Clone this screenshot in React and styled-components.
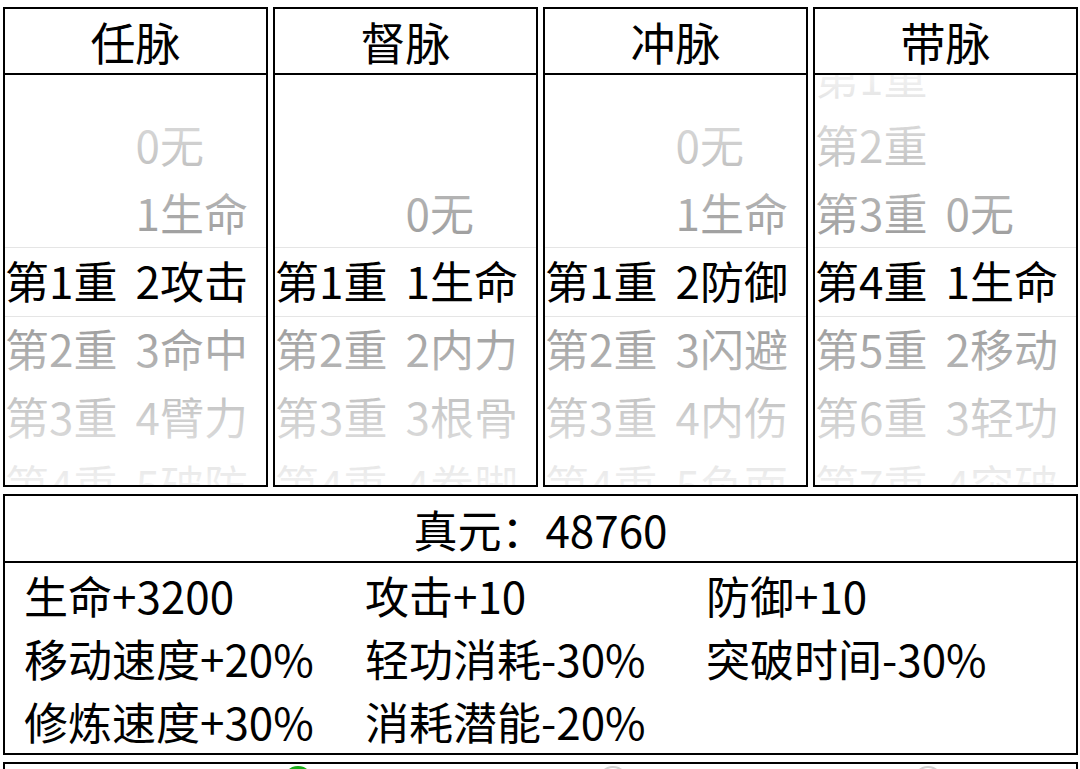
import React from "react";
import styled, { createGlobalStyle } from "styled-components";

const GlobalStyle = createGlobalStyle`
  html, body {
    margin: 0;
    padding: 0;
    background: #fff;
  }
  body {
    font-family: "Noto Sans CJK SC", "Noto Sans", sans-serif;
    color: #000;
  }
`;

const ROW = 68;
const PICKER_H = 410;
const INDICATOR_TOP = 173;
const TEXT_SIZE = 44;

const Page = styled.div`
  padding: 7px 2px 0 3px;
  display: flex;
  flex-direction: column;
  gap: 7px;
`;

const Meridians = styled.div`
  display: grid;
  grid-template-columns: repeat(4, 265px);
  gap: 5px;
`;

const Card = styled.section`
  border: 2px solid #000;
  display: flex;
  flex-direction: column;
`;

const CardTitle = styled.div`
  height: 64px;
  border-bottom: 2px solid #000;
  display: flex;
  align-items: center;
  justify-content: center;
  font-size: 45px;
  line-height: 1;
`;

const Picker = styled.div`
  position: relative;
  height: ${PICKER_H}px;
  overflow: hidden;
  display: flex;
`;

const Wheel = styled.div`
  flex: 1;
  position: relative;
  overflow: hidden;
`;

/* the selected entry lines up with the indicator band */
const WheelList = styled.ul`
  list-style: none;
  margin: 0;
  padding: 0;
  transform: translateY(${(p) => INDICATOR_TOP - 2 - p.$selected * ROW}px);
`;

const WheelItem = styled.li`
  height: ${ROW}px;
  line-height: ${ROW}px;
  font-size: ${TEXT_SIZE}px;
  white-space: nowrap;
  color: #000;
`;

const MaskTop = styled.div`
  position: absolute;
  left: 0;
  right: 0;
  top: 0;
  height: ${INDICATOR_TOP}px;
  background: linear-gradient(180deg, rgba(255, 255, 255, 0.95), rgba(255, 255, 255, 0.6));
  pointer-events: none;
`;

const MaskBottom = styled.div`
  position: absolute;
  left: 0;
  right: 0;
  bottom: 0;
  top: ${INDICATOR_TOP + ROW}px;
  background: linear-gradient(0deg, rgba(255, 255, 255, 0.95), rgba(255, 255, 255, 0.6));
  pointer-events: none;
`;

const Indicator = styled.div`
  position: absolute;
  left: 0;
  right: 0;
  top: ${INDICATOR_TOP - 1}px;
  height: ${ROW}px;
  border-top: 1px solid #e5e5e5;
  border-bottom: 1px solid #e5e5e5;
  pointer-events: none;
`;

const Summary = styled.section`
  border: 2px solid #000;
  display: flex;
  flex-direction: column;
`;

const SummaryTitle = styled.div`
  height: 65px;
  border-bottom: 2px solid #000;
  display: flex;
  align-items: center;
  justify-content: center;
  font-size: ${TEXT_SIZE}px;
  line-height: 1;
`;

const Stats = styled.div`
  display: grid;
  grid-template-columns: 341px 341px 1fr;
  grid-auto-rows: 63px;
  padding: 1px 0 0 19px;
`;

const Stat = styled.div`
  font-size: ${TEXT_SIZE}px;
  line-height: 63px;
  white-space: nowrap;
`;

const Options = styled.section`
  border: 2px solid #000;
  border-bottom: none;
  display: flex;
  gap: 285px;
  padding: 2px 0 0 278px;
  height: 60px;
`;

const Radio = styled.span`
  width: 30px;
  height: 30px;
  box-sizing: border-box;
  border-radius: 50%;
  border: 2px solid ${(p) => (p.$checked ? "#1aad19" : "#d1d1d1")};
  background: ${(p) => (p.$checked ? "#1aad19" : "#fff")};
`;

const levels = (n) => Array.from({ length: n }, (_, i) => `第${i + 1}重`);

const meridians = [
  {
    title: "任脉",
    left: levels(4),
    leftSel: 0,
    right: ["0无", "1生命", "2攻击", "3命中", "4臂力", "5破防"],
    rightSel: 2,
  },
  {
    title: "督脉",
    left: levels(4),
    leftSel: 0,
    right: ["0无", "1生命", "2内力", "3根骨", "4拳脚"],
    rightSel: 1,
  },
  {
    title: "冲脉",
    left: levels(4),
    leftSel: 0,
    right: ["0无", "1生命", "2防御", "3闪避", "4内伤", "5负面"],
    rightSel: 2,
  },
  {
    title: "带脉",
    left: levels(9),
    leftSel: 3,
    right: ["0无", "1生命", "2移动", "3轻功", "4突破"],
    rightSel: 1,
  },
];

const stats = [
  "生命+3200",
  "攻击+10",
  "防御+10",
  "移动速度+20%",
  "轻功消耗-30%",
  "突破时间-30%",
  "修炼速度+30%",
  "消耗潜能-20%",
];

function PickerWheel({ items, selected }) {
  return (
    <Wheel>
      <WheelList $selected={selected}>
        {items.map((t) => (
          <WheelItem key={t}>{t}</WheelItem>
        ))}
      </WheelList>
    </Wheel>
  );
}

function MeridianCard({ m }) {
  return (
    <Card>
      <CardTitle>{m.title}</CardTitle>
      <Picker>
        <PickerWheel items={m.left} selected={m.leftSel} />
        <PickerWheel items={m.right} selected={m.rightSel} />
        <MaskTop />
        <MaskBottom />
        <Indicator />
      </Picker>
    </Card>
  );
}

export default function App() {
  return (
    <>
      <GlobalStyle />
      <Page>
        <Meridians>
          {meridians.map((m) => (
            <MeridianCard key={m.title} m={m} />
          ))}
        </Meridians>
        <Summary>
          <SummaryTitle>真元：48760</SummaryTitle>
          <Stats>
            {stats.map((s) => (
              <Stat key={s}>{s}</Stat>
            ))}
          </Stats>
        </Summary>
        <Options>
          <Radio $checked />
          <Radio />
          <Radio />
        </Options>
      </Page>
    </>
  );
}
